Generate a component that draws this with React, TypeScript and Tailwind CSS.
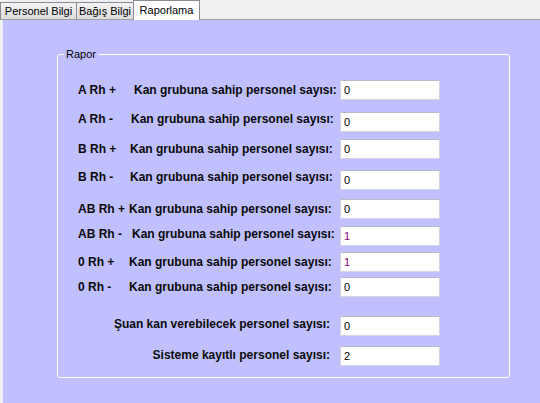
import React from 'react';

type Row = {
    mt: string;
    prefix: string;
    pw: string;
    value: string;
    tone: string;
    lift: string;
};

const rows: Row[] = [
    { mt: 'mt-0', prefix: 'A Rh +', pw: 'w-[56px]', value: '0', tone: 'text-black', lift: '' },
    { mt: 'mt-[12px]', prefix: 'A Rh -', pw: 'w-[53px]', value: '0', tone: 'text-black', lift: 'mb-[6px]' },
    { mt: 'mt-[7px]', prefix: 'B Rh +', pw: 'w-[52px]', value: '0', tone: 'text-black', lift: '' },
    { mt: 'mt-[11px]', prefix: 'B Rh -', pw: 'w-[52px]', value: '0', tone: 'text-black', lift: 'mb-[6px]' },
    { mt: 'mt-[9px]', prefix: 'AB Rh +', pw: 'w-[51px]', value: '0', tone: 'text-black', lift: '' },
    { mt: 'mt-[7px]', prefix: 'AB Rh -', pw: 'w-[54px]', value: '1', tone: 'text-[#800080]', lift: 'mb-[4px]' },
    { mt: 'mt-[6px]', prefix: '0 Rh +', pw: 'w-[51px]', value: '1', tone: 'text-[#800080]', lift: '' },
    { mt: 'mt-[5px]', prefix: '0 Rh -', pw: 'w-[51px]', value: '0', tone: 'text-black', lift: '' },
];

const ValueBox = ({ value, tone }: { value: string; tone: string }) => (
    <div className={`w-[100px] h-[20px] bg-white border border-[#d4d4e4] border-t-[#b8b8c8] pl-[3px] flex items-center ${tone}`}>
        {value}
    </div>
);

const App: React.FC = () => {
    return (
        <div className="w-[540px] h-[403px] bg-[#f0f0f0] flex flex-col font-['Liberation_Sans',Arial,sans-serif] text-[11px] text-black overflow-hidden">
            {/* tabs */}
            <div className="h-[20px] flex items-end shrink-0">
                <div className="h-[18px] w-[77px] border border-[#898c95] border-b-[#a0a0a0] bg-gradient-to-b from-[#f4f4f4] to-[#dcdcdc] flex items-center justify-center">
                    Personel Bilgi
                </div>
                <div className="h-[18px] w-[57px] border border-l-0 border-[#898c95] border-b-[#a0a0a0] bg-gradient-to-b from-[#f4f4f4] to-[#dcdcdc] flex items-center justify-center">
                    Bağış Bilgi
                </div>
                <div className="h-[20px] w-[67px] border border-b-0 border-[#898c95] bg-white flex items-center justify-center -ml-px">
                    Raporlama
                </div>
                <div className="flex-1 h-full border-b border-[#a0a0a0]" />
            </div>

            {/* page */}
            <div className="flex-1 bg-[#c0c0ff] border-l-[3px] border-l-[#f0f0f0]">
                <div className="ml-[54px] mt-[34px] w-[453px] h-[324px] border border-white rounded-[3px] relative">
                    <span className="absolute -top-[7px] left-[6px] px-[2px] bg-[#c0c0ff] leading-[13px]">Rapor</span>

                    <div className="flex flex-col pl-[20px] pt-[25px]">
                        {rows.map((r) => (
                            <div key={r.prefix} className={`flex items-center h-[20px] ${r.mt}`}>
                                <div className={`w-[262px] flex font-bold text-[12px] text-[#0a0a0a] whitespace-nowrap ${r.lift}`}>
                                    <span className={r.pw}>{r.prefix}</span>
                                    <span>Kan grubuna sahip personel sayısı:</span>
                                </div>
                                <ValueBox value={r.value} tone={r.tone} />
                            </div>
                        ))}

                        <div className="flex items-center h-[20px] mt-[19px]">
                            <div className="w-[252px] mr-[10px] text-right font-bold text-[12px] text-[#0a0a0a] whitespace-nowrap mb-[4px]">
                                Şuan kan verebilecek personel sayısı:
                            </div>
                            <ValueBox value="0" tone="text-black" />
                        </div>
                        <div className="flex items-center h-[20px] mt-[10px]">
                            <div className="w-[252px] mr-[10px] text-right font-bold text-[12px] text-[#0a0a0a] whitespace-nowrap mb-[2px]">
                                Sisteme kayıtlı personel sayısı:
                            </div>
                            <ValueBox value="2" tone="text-black" />
                        </div>
                    </div>
                </div>
            </div>
        </div>
    );
};

export default App;
